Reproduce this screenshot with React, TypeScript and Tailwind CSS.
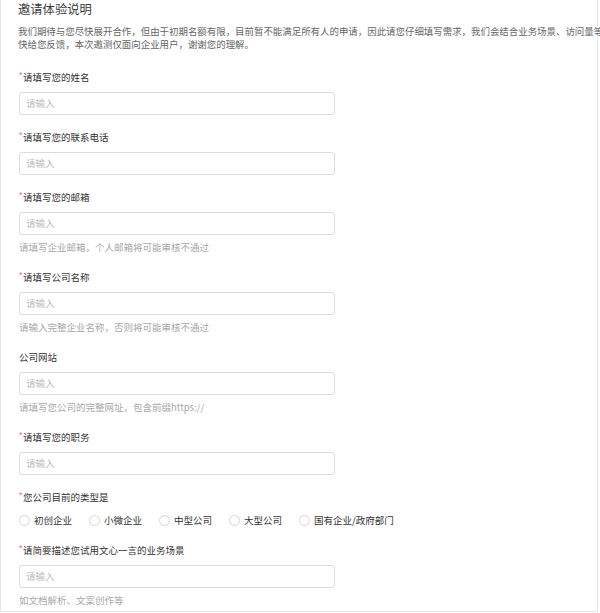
import React from "react";

const font = { fontFamily: '"Noto Sans CJK SC", "Liberation Sans", sans-serif' };

function Label({ text, required = true }: { text: string; required?: boolean }) {
  return (
    <div className="h-[14px] leading-[14px] text-[9.5px] text-[#333] whitespace-nowrap flex items-start">
      {required && (
        <span className="text-[#f56c6c] text-[9px] leading-[10px] w-[4px] inline-block" style={{ fontFamily: '"Liberation Sans", sans-serif' }}>
          *
        </span>
      )}
      <span>{text}</span>
    </div>
  );
}

function Field({ label, hint, required = true }: { label: string; hint?: string; required?: boolean }) {
  return (
    <div className="mb-[15px]">
      <Label text={label} required={required} />
      <div className="mt-[8px] w-[316px] h-[23px] border border-[#dcdcdc] rounded-[3px] bg-white flex items-center pl-[6px]">
        <span className="text-[9.5px] text-[#bdbdbd] leading-none">请输入</span>
      </div>
      {hint && (
        <div className="h-[20px] pt-[5px] leading-[14px] text-[9.5px] text-[#a8a8a8] whitespace-nowrap">{hint}</div>
      )}
    </div>
  );
}

function Radio({ text }: { text: string }) {
  return (
    <div className="flex items-center gap-[4px]">
      <span className="w-[11px] h-[11px] rounded-full border border-[#d6d6d6] bg-white inline-block" />
      <span className="text-[9.5px] text-[#333] leading-[14px] whitespace-nowrap">{text}</span>
    </div>
  );
}

export default function App() {
  return (
    <div className="w-[600px] h-[613px] overflow-hidden bg-white" style={font}>
      <div className="w-[598px] h-[612px] border-l border-r border-b border-[#e6e6e6] pl-[17px]">
        <div className="h-[19px] leading-[19px] text-[12.3px] text-[#3c3c3c] whitespace-nowrap">邀请体验说明</div>
        <div className="mt-[6px] text-[9.45px] leading-[13px] text-[#666] whitespace-nowrap">
          <div>我们期待与您尽快展开合作，但由于初期名额有限，目前暂不能满足所有人的申请，因此请您仔细填写需求，我们会结合业务场景、访问量等综合评估，尽</div>
          <div>快给您反馈，本次邀测仅面向企业用户，谢谢您的理解。</div>
        </div>
        <div className="mt-[19px] pl-[1px]">
          <Field label="请填写您的姓名" />
          <Field label="请填写您的联系电话" />
          <Field label="请填写您的邮箱" hint="请填写企业邮箱，个人邮箱将可能审核不通过" />
          <Field label="请填写公司名称" hint="请输入完整企业名称，否则将可能审核不通过" />
          <Field label="公司网站" required={false} hint="请填写您公司的完整网址，包含前缀https://" />
          <Field label="请填写您的职务" />
          <div className="mb-[16px]">
            <Label text="您公司目前的类型是" />
            <div className="mt-[9px] h-[14px] flex items-center gap-[17px]">
              <Radio text="初创企业" />
              <Radio text="小微企业" />
              <Radio text="中型公司" />
              <Radio text="大型公司" />
              <Radio text="国有企业/政府部门" />
            </div>
          </div>
          <Field label="请简要描述您试用文心一言的业务场景" hint="如文档解析、文案创作等" />
        </div>
      </div>
    </div>
  );
}
